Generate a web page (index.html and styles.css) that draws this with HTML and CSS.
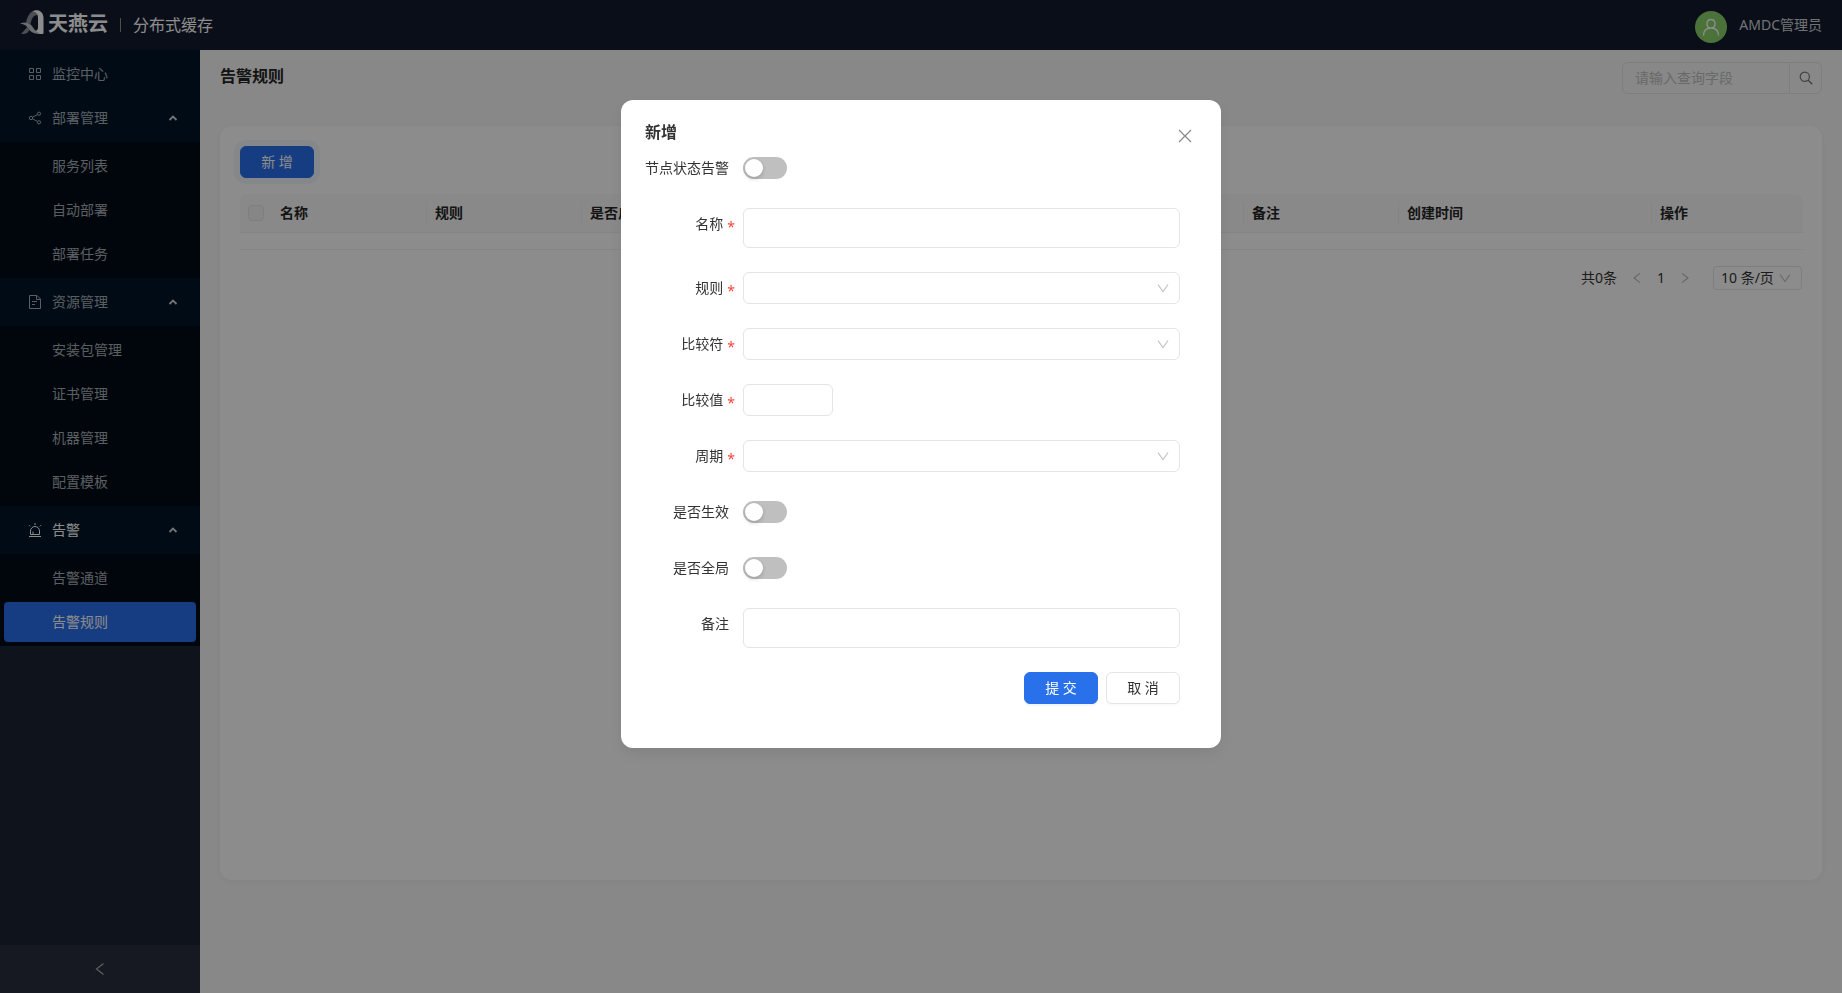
FILE: index.html
```html
<!DOCTYPE html>
<html lang="zh-CN">
<head>
  <meta charset="utf-8">
  <meta name="viewport" content="width=device-width, initial-scale=1.0">
  <title>分布式缓存 - 告警规则</title>
  <link rel="stylesheet" href="styles.css">
</head>
<body>
  <!-- Shared icons -->
  <svg class="icon-defs" aria-hidden="true">
    <symbol id="icon-up" viewBox="0 0 10 10"><path d="M1.500 7 5 3.500 8.500 7" fill="none" stroke="currentColor" stroke-width="1.800"/></symbol>
    <symbol id="icon-down" viewBox="0 0 12 12"><path d="M1 2.500 6 9.500l5-7" fill="none" stroke="currentColor" stroke-width="1.100"/></symbol>
    <symbol id="icon-left" viewBox="0 0 14 14"><path d="M10.500 1.500 3.500 7l7 5.500" fill="none" stroke="currentColor" stroke-width="1.200"/></symbol>
    <symbol id="icon-right" viewBox="0 0 14 14"><path d="M3.500 1.500 10.500 7l-7 5.500" fill="none" stroke="currentColor" stroke-width="1.200"/></symbol>
  </svg>

  <header class="header">
    <div class="brand">
      <svg class="brand-mark" viewBox="0 0 24 24" aria-hidden="true">
        <path d="M6 12.500C7.500 6 10.500.500 16 .300L17.500 5C13 5 11.500 9 10.500 14z" fill="#8d909b"/>
        <path d="M13 1.200C14.500.300 16 0 17.500.200 21.300.800 23.500 4 23.500 8v15c0 .6-.4 1-1 1-3.500.2-7-.6-9.500-2.800 3 .2 5-1 5-3.700V8c0-3-1-5.800-5-6.800z" fill="#fff"/>
        <path d="M0 13.500C5 11.300 9.500 12.500 12 16c1.800 2.700 3.500 5.500 7.500 7.300-5 .9-8.500-.8-10.700-4C6.700 16 4.500 14 0 13.500z" fill="#c4c6cd"/>
        <path d="M7.500 17C5 18.500 4 21.500 1 24c3.500 0 6.800-.5 8.300-3.800z" fill="#8d909b"/>
      </svg>
      <span class="brand-name">天燕云</span>
      <span class="brand-divider"></span>
      <span class="brand-product">分布式缓存</span>
    </div>
    <div class="user">
      <span class="avatar">
        <svg viewBox="0 0 18 18" aria-hidden="true"><path d="M9 1.500c2.500 0 4 1.800 4 4.200S11.500 10 9 10 5 8.100 5 5.700 6.500 1.500 9 1.500zM1.500 17.500C1.700 13 4.300 10 9 10s7.300 3 7.500 7.500" fill="none" stroke="currentColor" stroke-width="1.400"/></svg>
      </span>
      <span class="user-name">AMDC管理员</span>
    </div>
  </header>

  <div class="layout">
    <aside class="sidebar">
      <nav class="menu">
        <div class="menu-group">
          <a class="menu-item" href="#">
            <svg class="menu-icon" viewBox="0 0 14 14" aria-hidden="true"><path d="M1.500 1.500h4v4h-4zM8.500 1.500h4v4h-4zM1.500 8.500h4v4h-4zM8.500 8.500h4v4h-4z" fill="none" stroke="currentColor"/></svg>
            监控中心
          </a>
          <button class="menu-item" type="button">
            <svg class="menu-icon" viewBox="0 0 14 14" aria-hidden="true"><g fill="none" stroke="currentColor"><circle cx="3" cy="7" r="1.700"/><circle cx="11" cy="2.700" r="1.600"/><circle cx="11" cy="11.300" r="1.600"/><path d="M4.500 6.200 9.600 3.500M4.500 7.800l5.100 2.700"/></g></svg>
            部署管理
            <svg class="menu-arrow" aria-hidden="true"><use href="#icon-up"/></svg>
          </button>
        </div>
        <div class="submenu">
          <a class="menu-item" href="#">服务列表</a>
          <a class="menu-item" href="#">自动部署</a>
          <a class="menu-item" href="#">部署任务</a>
        </div>

        <div class="menu-group">
          <button class="menu-item" type="button">
            <svg class="menu-icon" viewBox="0 0 14 14" aria-hidden="true"><path d="M1.500.500H9l3.500 3.500v9.500h-11zM8.500.500v4h4M4 6.500h5M4 9.500h3" fill="none" stroke="currentColor"/></svg>
            资源管理
            <svg class="menu-arrow" aria-hidden="true"><use href="#icon-up"/></svg>
          </button>
        </div>
        <div class="submenu">
          <a class="menu-item" href="#">安装包管理</a>
          <a class="menu-item" href="#">证书管理</a>
          <a class="menu-item" href="#">机器管理</a>
          <a class="menu-item" href="#">配置模板</a>
        </div>

        <div class="menu-group">
          <button class="menu-item open" type="button">
            <svg class="menu-icon" viewBox="0 0 14 14" aria-hidden="true"><path d="M2.500 11.500V8a4.500 4.500 0 0 1 9 0v3.500zM1 13.500h12M5 11V8.500M7 0v2M1 2.200l1.200 1.200M13 2.200l-1.200 1.200" fill="none" stroke="currentColor"/></svg>
            告警
            <svg class="menu-arrow" aria-hidden="true"><use href="#icon-up"/></svg>
          </button>
        </div>
        <div class="submenu">
          <a class="menu-item" href="#">告警通道</a>
          <a class="menu-item selected" href="#">告警规则</a>
        </div>
      </nav>
      <button class="collapse-btn" type="button" aria-label="收起菜单">
        <svg aria-hidden="true"><use href="#icon-left"/></svg>
      </button>
    </aside>

    <main class="content">
      <div class="page-header">
        <h1 class="page-title">告警规则</h1>
        <form class="search">
          <input type="text" placeholder="请输入查询字段" aria-label="查询字段">
          <button type="button" aria-label="查询">
            <svg viewBox="0 0 14 14" aria-hidden="true"><circle cx="5.800" cy="5.800" r="4.600" fill="none" stroke="currentColor" stroke-width="1.200"/><path d="M9.200 9.200l4 4" stroke="currentColor" stroke-width="1.300"/></svg>
          </button>
        </form>
      </div>

      <section class="card">
        <button class="btn btn-primary btn-focus" type="button">新 增</button>
        <table class="rule-table">
          <colgroup>
            <col class="col-check">
            <col class="col-std">
            <col class="col-std">
            <col class="col-std">
            <col class="col-mid">
            <col class="col-mid">
            <col class="col-mid">
            <col class="col-std">
            <col class="col-time">
            <col class="col-action">
          </colgroup>
          <thead>
            <tr>
              <th><input type="checkbox" disabled aria-label="全选"></th>
              <th><span>名称</span></th>
              <th><span>规则</span></th>
              <th><span>是否启用</span></th>
              <th><span>比较符</span></th>
              <th><span>比较值</span></th>
              <th><span>周期</span></th>
              <th><span>备注</span></th>
              <th><span>创建时间</span></th>
              <th><span>操作</span></th>
            </tr>
          </thead>
          <tbody>
            <tr><td colspan="10"></td></tr>
          </tbody>
        </table>
        <div class="pagination">
          <span>共0条</span>
          <div class="pager">
            <button type="button" aria-label="上一页" disabled><svg aria-hidden="true"><use href="#icon-left"/></svg></button>
            <span class="page-number">1</span>
            <button type="button" aria-label="下一页" disabled><svg aria-hidden="true"><use href="#icon-right"/></svg></button>
          </div>
          <div class="select-box page-size">
            <select aria-label="每页条数"><option>10 条/页</option></select>
            <svg aria-hidden="true"><use href="#icon-down"/></svg>
          </div>
        </div>
      </section>
    </main>
  </div>

  <div class="mask">
    <div class="modal" role="dialog" aria-labelledby="modalTitle">
      <button class="modal-close" type="button" aria-label="关闭">
        <svg viewBox="0 0 14 14" aria-hidden="true"><path d="M1 1l12 12M13 1 1 13" stroke="currentColor" stroke-width="1.300"/></svg>
      </button>
      <h2 class="modal-title" id="modalTitle">新增</h2>
      <form class="rule-form">
        <div class="form-row">
          <label for="nodeAlarm">节点状态告警</label>
          <div class="form-field"><input class="switch" type="checkbox" id="nodeAlarm"></div>
        </div>
        <div class="form-row">
          <label class="required" for="name">名称</label>
          <div class="form-field"><textarea id="name" rows="1"></textarea></div>
        </div>
        <div class="form-row">
          <label class="required" for="rule">规则</label>
          <div class="form-field select-box">
            <select id="rule"><option value=""></option></select>
            <svg aria-hidden="true"><use href="#icon-down"/></svg>
          </div>
        </div>
        <div class="form-row">
          <label class="required" for="operator">比较符</label>
          <div class="form-field select-box">
            <select id="operator"><option value=""></option></select>
            <svg aria-hidden="true"><use href="#icon-down"/></svg>
          </div>
        </div>
        <div class="form-row">
          <label class="required" for="threshold">比较值</label>
          <div class="form-field"><input class="number" type="text" inputmode="numeric" id="threshold"></div>
        </div>
        <div class="form-row">
          <label class="required" for="period">周期</label>
          <div class="form-field select-box">
            <select id="period"><option value=""></option></select>
            <svg aria-hidden="true"><use href="#icon-down"/></svg>
          </div>
        </div>
        <div class="form-row">
          <label for="enabled">是否生效</label>
          <div class="form-field"><input class="switch" type="checkbox" id="enabled"></div>
        </div>
        <div class="form-row">
          <label for="global">是否全局</label>
          <div class="form-field"><input class="switch" type="checkbox" id="global"></div>
        </div>
        <div class="form-row">
          <label for="remark">备注</label>
          <div class="form-field"><textarea id="remark" rows="1"></textarea></div>
        </div>
        <div class="form-actions">
          <button class="btn btn-primary" type="button">提 交</button>
          <button class="btn" type="button">取 消</button>
        </div>
      </form>
    </div>
  </div>
</body>
</html>
```

FILE: styles.css
```css
*, *::before, *::after {
  box-sizing: border-box;
  margin: 0;
  padding: 0;
}

body {
  font-family: "Noto Sans", "Noto Sans CJK SC", sans-serif;
  font-size: 14px;
  line-height: 22px;
  color: #333;
  background-color: #f8f8f8;
  min-height: 100vh;
  display: flex;
  flex-direction: column;
}

button, input, select, textarea {
  font: inherit;
  color: inherit;
}

button {
  border: none;
  background: none;
  cursor: pointer;
}

a {
  color: inherit;
  text-decoration: none;
}

svg {
  display: block;
  width: 14px;
  height: 14px;
  flex: none;
}

.icon-defs {
  position: absolute;
  width: 0;
  height: 0;
}

/* Header */
.header {
  height: 50px;
  padding: 0 20px;
  background-color: #111a2e;
  color: #fff;
  display: flex;
  justify-content: space-between;
}

.brand {
  display: flex;
  align-items: center;
}

.brand-mark {
  width: 24px;
  height: 24px;
  margin-right: 4px;
  margin-bottom: 6px;
}

.brand-name {
  font-size: 20px;
  font-weight: 700;
  line-height: 24px;
  margin-bottom: 2px;
}

.brand-divider {
  width: 1px;
  height: 14px;
  margin: 0 12px;
  background-color: #888c96;
}

.brand-product {
  font-size: 16px;
}

.user {
  display: flex;
  align-items: center;
  gap: 12px;
}

.avatar {
  width: 32px;
  height: 32px;
  margin-top: 4px;
  border-radius: 50%;
  background-color: #87d068;
  display: flex;
  align-items: center;
  justify-content: center;
}

.avatar svg {
  width: 18px;
  height: 18px;
}

.user-name {
  color: #d0d1d5;
}

.layout {
  flex: 1;
  display: flex;
}

/* Sidebar */
.sidebar {
  width: 200px;
  flex: none;
  background-color: #1d2433;
  color: #a6adb4;
  display: flex;
  flex-direction: column;
  justify-content: space-between;
}

.menu-group, .submenu {
  padding: 4px 0;
  display: flex;
  flex-direction: column;
  gap: 4px;
}

.menu-group {
  background-color: #001529;
}

.submenu {
  background-color: #000c14;
  padding: 4px;
}

.menu-item {
  height: 40px;
  padding: 0 22px 0 28px;
  border-radius: 4px;
  display: flex;
  align-items: center;
  gap: 10px;
  text-align: left;
}

.submenu .menu-item {
  padding: 0 48px;
}

.menu-item.open {
  color: #fff;
}

.menu-item.selected {
  background-color: #2970eb;
  color: #fff;
}

.menu-arrow {
  width: 10px;
  height: 10px;
  margin-left: auto;
  color: #d3d6d9;
}

.collapse-btn {
  height: 48px;
  background-color: #282f3e;
  display: flex;
  align-items: center;
  justify-content: center;
}

/* Content */
.content {
  flex: 1;
  min-width: 0;
  padding: 0 20px;
}

.page-header {
  padding: 12px 0;
  margin-bottom: 20px;
  display: flex;
  justify-content: space-between;
}

.page-title {
  font-size: 16px;
  font-weight: 600;
  line-height: 28px;
  color: #262626;
}

.search {
  width: 200px;
  height: 32px;
  border: 1px solid #e5e5e5;
  border-radius: 6px;
  display: flex;
}

.search input {
  flex: 1;
  min-width: 0;
  padding: 0 12px;
  border: none;
  outline: none;
  background: none;
}

.search input::placeholder {
  color: #bfbfbf;
}

.search button {
  width: 32px;
  border-left: 1px solid #e5e5e5;
  color: #777;
  display: flex;
  align-items: center;
  justify-content: center;
}

.card {
  min-height: calc(100vh - 239px);
  padding: 20px;
  border-radius: 12px;
  background-color: #fff;
  box-shadow: 0 2px 8px rgba(0, 0, 0, 0.04);
}

.btn {
  width: 74px;
  height: 32px;
  border: 1px solid #e5e5e5;
  border-radius: 6px;
  background-color: #fff;
  box-shadow: 0 2px 0 rgba(0, 0, 0, 0.02);
}

.btn-primary {
  border-color: #2970eb;
  background-color: #2970eb;
  color: #fff;
  box-shadow: 0 2px 0 rgba(5, 100, 255, 0.06);
}

.btn-focus {
  display: block;
  box-shadow: 0 0 0 6px rgba(41, 140, 235, 0.06);
}

/* Table */
.rule-table {
  width: 100%;
  margin-top: 16px;
  table-layout: fixed;
  border-collapse: separate;
  border-spacing: 0;
}

.col-check { width: 32px; }
.col-std { width: 155px; }
.col-mid { width: 169px; }
.col-time { width: 253px; }
.col-action { width: 151px; }

.rule-table th {
  height: 39px;
  padding: 8px 0;
  background-color: #fafafa;
  border-bottom: 1px solid #f0f0f0;
  font-weight: 600;
  line-height: 22px;
  text-align: left;
  color: #262626;
}

.rule-table th:first-child {
  padding: 0 8px;
  border-top-left-radius: 8px;
}

.rule-table th:last-child {
  border-top-right-radius: 8px;
}

.rule-table th span {
  display: block;
  padding: 0 8px;
  border-right: 1px solid #f0f0f0;
}

.rule-table th:last-child span {
  border-right: none;
}

.rule-table th input {
  appearance: none;
  display: block;
  width: 16px;
  height: 16px;
  border: 1px solid #e5e5e5;
  border-radius: 4px;
  background-color: #f5f5f5;
}

.rule-table td {
  height: 17px;
  border-bottom: 1px solid #f0f0f0;
}

.pagination {
  margin-top: 16px;
  display: flex;
  align-items: center;
  justify-content: flex-end;
  gap: 8px;
}

.pager {
  display: flex;
  align-items: center;
  margin-right: 8px;
}

.pager button, .page-number {
  width: 24px;
  height: 24px;
  line-height: 24px;
  text-align: center;
  display: flex;
  align-items: center;
  justify-content: center;
  color: #b5b5b5;
}

.pager svg {
  width: 12px;
  height: 12px;
}

.pager .page-number {
  color: #333;
}

/* Drop-downs */
.select-box {
  position: relative;
}

.select-box select {
  appearance: none;
  display: block;
  width: 100%;
  height: 32px;
  padding: 0 12px;
  border: 1px solid #e5e5e5;
  border-radius: 6px;
  background-color: #fff;
}

.select-box svg {
  position: absolute;
  top: 50%;
  right: 11px;
  width: 12px;
  height: 12px;
  margin-top: -6px;
  color: #bfbfbf;
  pointer-events: none;
}

.page-size select {
  width: 89px;
  height: 24px;
  padding: 0 7px;
  border-radius: 4px;
}

/* Modal */
.mask {
  position: fixed;
  inset: 0;
  padding-top: 100px;
  background-color: rgba(0, 0, 0, 0.45);
  display: flex;
  align-items: flex-start;
  justify-content: center;
}

.modal {
  position: relative;
  width: 600px;
  padding: 20px 24px;
  border-radius: 12px;
  background-color: #fff;
  box-shadow: 0 6px 16px rgba(0, 0, 0, 0.08);
}

.modal-title {
  margin-bottom: 8px;
  font-size: 16px;
  font-weight: 600;
  line-height: 24px;
}

.modal-close {
  position: absolute;
  top: 25px;
  right: 25px;
  width: 22px;
  height: 22px;
  display: flex;
  align-items: center;
  justify-content: center;
  color: #8c8c8c;
}

.rule-form {
  padding-right: 17px;
  padding-bottom: 24px;
  display: flex;
  flex-direction: column;
  gap: 24px;
}

.form-row {
  display: flex;
  align-items: flex-start;
}

.form-row label {
  width: 98px;
  height: 32px;
  flex: none;
  padding-right: 14px;
  line-height: 32px;
  text-align: right;
}

.form-row label.required {
  padding-right: 8px;
  display: flex;
  justify-content: flex-end;
  gap: 4px;
}

.form-row label.required::after {
  content: "*";
  padding-top: 3px;
  color: #f5413d;
}

.form-field {
  flex: 1;
  min-height: 32px;
}

.form-field textarea,
.form-field .number {
  display: block;
  width: 100%;
  height: 40px;
  padding: 8px 12px;
  border: 1px solid #e5e5e5;
  border-radius: 6px;
  outline: none;
  resize: none;
}

.form-field .number {
  width: 90px;
  height: 32px;
}

.switch {
  appearance: none;
  display: block;
  width: 44px;
  height: 22px;
  margin: 5px 0;
  padding: 2px;
  border-radius: 11px;
  background-color: #bfbfbf;
  cursor: pointer;
}

.switch::before {
  content: "";
  display: block;
  width: 18px;
  height: 18px;
  border-radius: 50%;
  background-color: #fff;
  box-shadow: 0 2px 4px rgba(0, 35, 11, 0.2);
}

.switch:checked {
  background-color: #2970eb;
}

.switch:checked::before {
  margin-left: 22px;
}

.form-actions {
  display: flex;
  justify-content: flex-end;
  gap: 8px;
}
```
